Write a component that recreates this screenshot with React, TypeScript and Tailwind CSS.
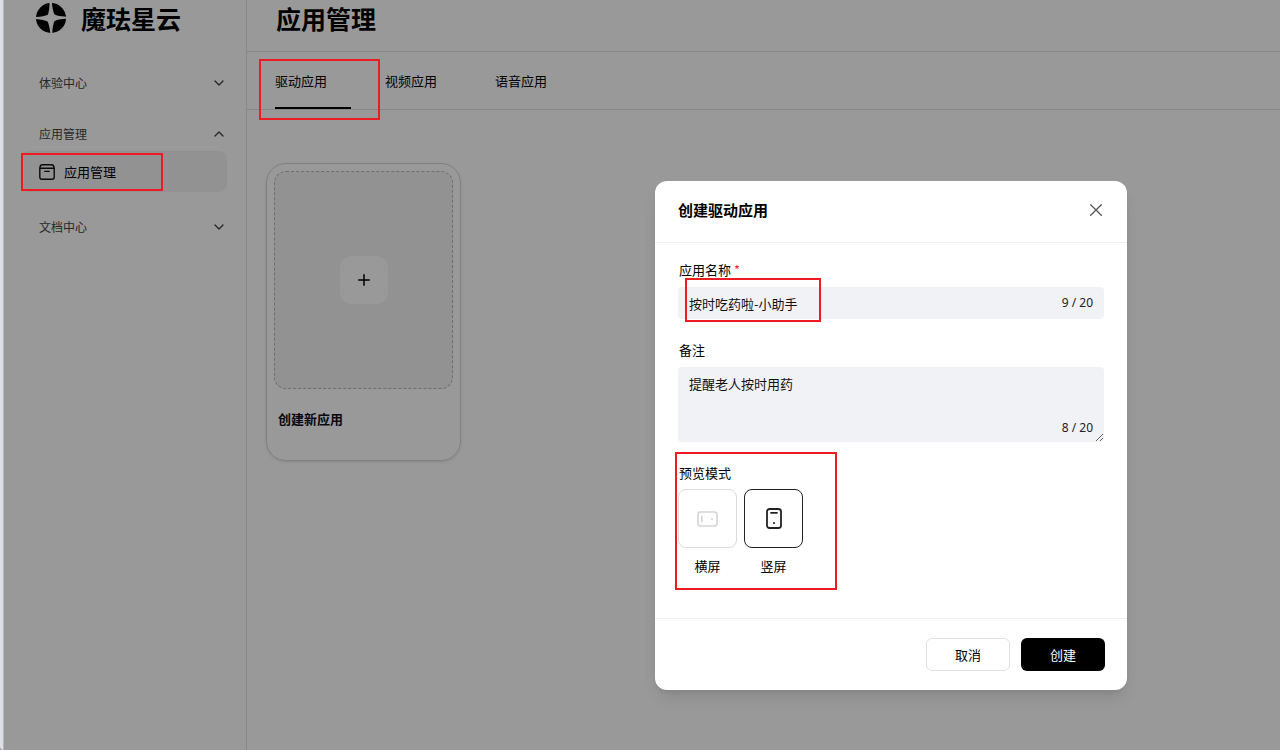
import { useState } from "react";
import { ChevronDown, ChevronUp, Plus } from "lucide-react";

const tabs = ["驱动应用", "视频应用", "语音应用"];

const modes = [
  { id: "landscape", label: "横屏" },
  { id: "portrait", label: "竖屏" },
];

function Logo() {
  return (
    <svg width="30" height="30" viewBox="0 0 30 30" className="shrink-0">
      <circle cx="15" cy="15" r="15" fill="#000" />
      <path
        d="M13.6 -1 L15.8 -1 Q16.6 8 18.6 11.6 Q22 13.4 31 13.8 L31 15.6 Q22 16 18.4 18.2 Q16.6 22 16.2 31 L14.4 31 Q13.4 22 11.6 18.4 Q8 16.8 -1 15.8 L-1 14 Q8 13.8 11.8 11.8 Q13.4 8 13.6 -1Z"
        fill="#fff"
      />
    </svg>
  );
}

function AppIcon() {
  return (
    <svg width="16" height="16" viewBox="0 0 16 16" fill="none" stroke="#111" strokeWidth="1.4" strokeLinecap="round" strokeLinejoin="round">
      <path d="M1 4.4 V3.4 Q1.2 0.8 3.6 0.8 H12.4 Q14.8 0.8 15 3.4 V4.4" />
      <path d="M0.8 4.2 H15.2 V13 Q15.2 15.2 13 15.2 H3 Q0.8 15.2 0.8 13 Z" />
      <path d="M5.8 7.4 H10.2" />
    </svg>
  );
}

function LandscapeIcon() {
  return (
    <svg width="21" height="16" viewBox="0 0 21 16" fill="none" stroke="currentColor" strokeWidth="1.6" strokeLinecap="round">
      <rect x="1" y="1" width="19" height="14" rx="2.5" />
      <path d="M4.8 5.5 V10.5" />
      <circle cx="15" cy="8" r="1" fill="currentColor" stroke="none" />
    </svg>
  );
}

function PortraitIcon() {
  return (
    <svg width="16" height="21" viewBox="0 0 16 21" fill="none" stroke="currentColor" strokeWidth="1.8" strokeLinecap="round">
      <rect x="1" y="1" width="14" height="19" rx="2.5" />
      <path d="M5 4.8 H11" />
      <circle cx="8" cy="15" r="1.1" fill="currentColor" stroke="none" />
    </svg>
  );
}

function Highlight({ className }: { className: string }) {
  return <span className={`pointer-events-none absolute z-20 border-2 border-[#ed1c24] ${className}`} />;
}

function Sidebar() {
  return (
    <aside className="w-[243px] shrink-0 border-r border-[#e3e3e3] pl-[17px] pr-[19px]">
      <div className="flex h-9 items-center gap-[15px] pl-[15px]">
        <Logo />
        <span className="text-[25px] font-bold leading-9">魔珐星云</span>
      </div>
      <nav className="mt-[30px] text-[12px] text-[#444]">
        <button className="flex h-[34px] w-full items-center justify-between pl-[18px]">
          体验中心
          <ChevronDown size={16} />
        </button>
        <button className="mt-[17px] flex h-[34px] w-full items-center justify-between pl-[18px]">
          应用管理
          <ChevronUp size={16} />
        </button>
        <a href="#apps" className="relative flex h-[41px] items-center gap-[9px] rounded-lg bg-[#f3f3f3] pl-[18px] text-[13px] text-black">
          <AppIcon />
          应用管理
          <Highlight className="left-0 top-[2px] h-[38px] w-[142px]" />
        </a>
        <button className="mt-[18px] flex h-[34px] w-full items-center justify-between pl-[18px]">
          文档中心
          <ChevronDown size={16} />
        </button>
      </nav>
    </aside>
  );
}

function CreateDialog() {
  const [name, setName] = useState("按时吃药啦-小助手");
  const [remark, setRemark] = useState("提醒老人按时用药");
  const [mode, setMode] = useState("portrait");

  return (
    <form
      role="dialog"
      aria-labelledby="dialog-title"
      onSubmit={(e) => e.preventDefault()}
      className="w-[472px] rounded-xl bg-white text-[13px] leading-5 shadow-lg"
    >
      <div className="flex h-[62px] items-center justify-between border-b border-[#eff0f3] pb-[3px] pl-[23px] pr-[25px]">
        <h2 id="dialog-title" className="text-[15px] font-bold">创建驱动应用</h2>
        <button type="button" aria-label="关闭">
          <svg width="12" height="12" viewBox="0 0 12 12" stroke="#555" strokeWidth="1.3" strokeLinecap="round">
            <path d="M0.7 0.7 L11.3 11.3 M11.3 0.7 L0.7 11.3" />
          </svg>
        </button>
      </div>

      <div className="px-[23px] pb-[42px] pt-[17px]">
        <label htmlFor="app-name" className="block pl-px">
          应用名称 <span className="text-red-500">*</span>
        </label>
        <div className="relative mt-[7px]">
          <input
            id="app-name"
            value={name}
            maxLength={20}
            onChange={(e) => setName(e.target.value)}
            className="block h-8 w-full rounded bg-[#f1f2f5] pl-[11px] pr-16 text-[#111]"
          />
          <span className="absolute right-[11px] top-[6px] font-['Noto_Sans'] text-[12px] text-[#222]">{name.length} / 20</span>
          <Highlight className="-top-[9px] left-[7px] h-11 w-[136px]" />
        </div>

        <label htmlFor="remark" className="mt-[21px] block pl-px">备注</label>
        <div className="relative mt-[7px]">
          <textarea
            id="remark"
            value={remark}
            maxLength={20}
            onChange={(e) => setRemark(e.target.value)}
            className="block h-[75px] w-full rounded bg-[#f1f2f5] px-[11px] py-[7px] text-[#111]"
          />
          <span className="absolute bottom-1 right-[11px] font-['Noto_Sans'] text-[12px] text-[#222]">{remark.length} / 20</span>
        </div>

        <fieldset className="relative mt-[21px]">
          <legend className="pl-px">预览模式</legend>
          <div className="flex gap-[7px] pt-[6px]">
            {modes.map((m) => (
              <label key={m.id} className="flex flex-col items-center gap-2">
                <input
                  type="radio"
                  name="mode"
                  value={m.id}
                  checked={mode === m.id}
                  onChange={() => setMode(m.id)}
                  className="sr-only"
                />
                <span
                  className={`flex size-[59px] items-center justify-center rounded-lg border ${
                    mode === m.id ? "border-[#222] text-[#222]" : "border-[#dcdcdc] text-[#d4d4d4]"
                  }`}
                >
                  {m.id === "landscape" ? <LandscapeIcon /> : <PortraitIcon />}
                </span>
                {m.label}
              </label>
            ))}
          </div>
          <Highlight className="-left-[3px] -top-[31px] h-[138px] w-[162px]" />
        </fieldset>
      </div>

      <div className="flex justify-end gap-[11px] border-t border-[#eff0f3] px-[22px] pb-[19px] pt-[19px]">
        <button type="button" className="h-[33px] w-[84px] rounded-md border border-[#dfe0e4] bg-white">取消</button>
        <button type="submit" className="h-[33px] w-[84px] rounded-md bg-black text-white">创建</button>
      </div>
    </form>
  );
}

export default function App() {
  return (
    <div className="relative flex min-h-screen bg-white font-['Noto_Sans_CJK_SC','Noto_Sans',sans-serif] text-black">
      <div className="relative z-20 w-1 shrink-0 rounded-bl border-r border-[#b4b6ba] bg-[#dcdfe6]" />
      <Sidebar />

      <main className="min-w-0 flex-1">
        <header className="flex h-[52px] items-center border-b border-[#dfdfdf] pb-4 pl-[29px]">
          <h1 className="text-[25px] font-bold leading-9">应用管理</h1>
        </header>

        <div role="tablist" className="relative flex h-[58px] gap-[34px] border-b border-[#dfdfdf] pl-7 text-[13px]">
          {tabs.map((tab, i) => (
            <button
              key={tab}
              role="tab"
              aria-selected={i === 0}
              className={`w-[76px] border-b-2 pt-[2px] text-left ${i === 0 ? "border-black" : "border-transparent"}`}
            >
              {tab}
            </button>
          ))}
          <Highlight className="left-3 top-[7px] h-[61px] w-[121px]" />
        </div>

        <section className="pl-[19px] pt-[53px]">
          <button className="block w-[195px] rounded-[20px] border border-[#d6d6d6] p-[7px] pb-[29px] text-left shadow-sm">
            <span className="flex h-[218px] items-center justify-center rounded-xl border border-dashed border-[#b8b8b8] bg-[#f3f3f3]">
              <span className="flex size-12 items-center justify-center rounded-xl bg-white">
                <Plus size={18} />
              </span>
            </span>
            <span className="mt-[18px] block pl-1 text-[13px] font-bold leading-6 text-[#101020]">创建新应用</span>
          </button>
        </section>
      </main>

      <div className="absolute inset-0 z-10 flex items-start justify-end bg-black/40 pr-[153px] pt-[181px]">
        <CreateDialog />
      </div>
    </div>
  );
}
